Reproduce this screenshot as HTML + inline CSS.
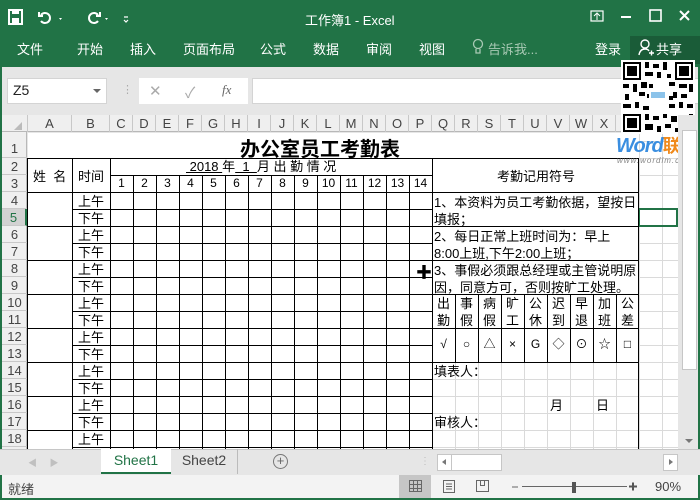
<!DOCTYPE html>
<html><head><meta charset="utf-8">
<style>
*{margin:0;padding:0;box-sizing:border-box}
body{width:700px;height:500px;overflow:hidden;position:relative;background:#e6e6e6;font-family:"Liberation Sans","Noto Sans CJK SC",sans-serif;}
.a{position:absolute}
.w{color:#fff;font-size:13px}
.ch{position:absolute;top:115px;height:17px;font-size:13px;color:#444;text-align:center;line-height:17px;border-right:1px solid #c8c8c8}
.rh{position:absolute;left:2px;width:25px;font-size:13px;color:#444;text-align:center;border-bottom:1px solid #c8c8c8}
.t{position:absolute;font-size:13px;color:#000;white-space:nowrap;font-family:"Liberation Sans","Noto Sans CJK SC",sans-serif}
.hl{position:absolute;height:1px;background:#000}
.vl{position:absolute;width:1px;background:#000}
</style></head><body>
<!-- ribbon -->
<div class="a" style="left:0;top:0;width:700px;height:67px;background:#217346"></div>
<svg class="a" style="left:8px;top:6px" width="130" height="22" viewBox="0 0 130 22">
<rect x="1" y="4" width="13" height="14" fill="none" stroke="#fff" stroke-width="2"/><rect x="4" y="4" width="7" height="4" fill="#fff"/><rect x="4" y="12" width="7" height="5" fill="#fff"/>
<path d="M33 9 a5 5 0 1 1 0 6 M31 6 v4 h4" fill="none" stroke="#fff" stroke-width="2"/><path d="M51 12 l3 0 l-1.5 2z" fill="#fff"/>
<path d="M90 9 a5 5 0 1 0 0 6 M92 6 v4 h-4" fill="none" stroke="#fff" stroke-width="2"/><path d="M97 12 l3 0 l-1.5 2z" fill="#fff"/>
<path d="M116 11 h4 M116 14 l2 2 l2 -2" fill="none" stroke="#fff" stroke-width="1.2"/>
</svg>
<div class="a w" style="left:305px;top:10px">工作簿1 - Excel</div>
<svg class="a" style="left:588px;top:6px" width="110" height="22">
<rect x="3" y="5" width="12" height="10" fill="none" stroke="#fff" stroke-width="1.2"/><path d="M9 14 v-6 M6 10 l3-3 3 3" stroke="#fff" fill="none"/>
<path d="M33 11 h10" stroke="#fff" stroke-width="2"/>
<rect x="62" y="4" width="11" height="11" fill="none" stroke="#fff" stroke-width="1.6"/>
<path d="M92 5 l9 9 M101 5 l-9 9" stroke="#fff" stroke-width="2"/>
</svg>
<div class="a w" style="left:17px;top:39px">文件</div>
<div class="a w" style="left:77px;top:39px">开始</div>
<div class="a w" style="left:130px;top:39px">插入</div>
<div class="a w" style="left:183px;top:39px">页面布局</div>
<div class="a w" style="left:260px;top:39px">公式</div>
<div class="a w" style="left:313px;top:39px">数据</div>
<div class="a w" style="left:366px;top:39px">审阅</div>
<div class="a w" style="left:419px;top:39px">视图</div>
<div class="a w" style="left:488px;top:39px;color:#a8c9b4">告诉我...</div>
<svg class="a" style="left:472px;top:38px" width="12" height="18"><circle cx="6" cy="6" r="4.5" fill="none" stroke="#a8c9b4" stroke-width="1.3"/><path d="M4 11 v4 h4 v-4" fill="none" stroke="#a8c9b4" stroke-width="1.3"/></svg>
<div class="a w" style="left:595px;top:39px">登录</div>
<div class="a" style="left:630px;top:36px;width:70px;height:28px;background:#1a5c38"></div>
<svg class="a" style="left:637px;top:38px" width="20" height="20"><circle cx="8" cy="6" r="4" fill="none" stroke="#fff" stroke-width="1.4"/><path d="M2 17 q1-6 6-6 q3 0 4 2 M12 15 h5 M14.5 12.5 v5" fill="none" stroke="#fff" stroke-width="1.4"/></svg>
<div class="a w" style="left:656px;top:39px">共享</div>
<!-- formula bar -->
<div class="a" style="left:7px;top:78px;width:100px;height:26px;background:#fff;border:1px solid #d4d4d4"></div>
<div class="a" style="left:13px;top:82px;font-size:14px;color:#222">Z5</div>
<div class="a" style="left:93px;top:89px;width:0;height:0;border-left:4px solid transparent;border-right:4px solid transparent;border-top:4px solid #666"></div>
<div class="a" style="left:122px;top:83px;font-size:11px;color:#aaa">⋮</div>
<div class="a" style="left:139px;top:78px;width:109px;height:26px;background:#fff"></div>
<div class="a" style="left:149px;top:82px;font-size:15px;color:#aaa">✕</div>
<div class="a" style="left:185px;top:82px;font-size:15px;color:#aaa">✓</div>
<div class="a" style="left:222px;top:82px;font-size:13px;color:#666;font-style:italic;font-family:'Liberation Serif',serif">fx</div>
<div class="a" style="left:252px;top:78px;width:448px;height:26px;background:#fff;border:1px solid #d4d4d4"></div>
<!-- headers -->
<div class="a" style="left:0;top:113px;width:700px;height:2px;background:#e6e6e6"></div>
<div class="a" style="left:0;top:115px;width:678px;height:17px;background:#efefef;border-bottom:1px solid #b8b8b8"></div>
<div class="a" style="left:14px;top:122px;width:0;height:0;border-left:8px solid transparent;border-bottom:8px solid #bbb"></div>
<div class="ch" style="left:27px;width:45px;border-left:1px solid #c8c8c8">A</div>
<div class="ch" style="left:72px;width:38px">B</div>
<div class="ch" style="left:110px;width:23px">C</div><div class="ch" style="left:133px;width:23px">D</div><div class="ch" style="left:156px;width:23px">E</div><div class="ch" style="left:179px;width:23px">F</div><div class="ch" style="left:202px;width:23px">G</div><div class="ch" style="left:225px;width:23px">H</div><div class="ch" style="left:248px;width:23px">I</div><div class="ch" style="left:271px;width:23px">J</div><div class="ch" style="left:294px;width:23px">K</div><div class="ch" style="left:317px;width:23px">L</div><div class="ch" style="left:340px;width:23px">M</div><div class="ch" style="left:363px;width:23px">N</div><div class="ch" style="left:386px;width:23px">O</div><div class="ch" style="left:409px;width:23px">P</div><div class="ch" style="left:432px;width:23px">Q</div><div class="ch" style="left:455px;width:23px">R</div><div class="ch" style="left:478px;width:23px">S</div><div class="ch" style="left:501px;width:23px">T</div><div class="ch" style="left:524px;width:23px">U</div><div class="ch" style="left:547px;width:23px">V</div><div class="ch" style="left:570px;width:23px">W</div><div class="ch" style="left:593px;width:23px">X</div>
<div class="a" style="left:0;top:132px;width:27px;height:317px;background:#efefef;border-right:1px solid #b8b8b8"></div>
<div class="a" style="left:0;top:67px;width:2px;height:433px;background:#217346"></div>
<div class="a" style="left:698px;top:67px;width:2px;height:433px;background:#217346"></div>
<div class="rh" style="top:132px;height:26px;line-height:34px">1</div>
<div class="rh" style="top:158px;height:17px;line-height:17px">2</div>
<div class="rh" style="top:175px;height:17px;line-height:17px">3</div>
<div class="rh" style="top:192px;height:17px;line-height:17px">4</div>
<div class="rh" style="top:209px;height:17px;line-height:17px;background:#d2d2d2;color:#217346;border-right:2px solid #217346">5</div>
<div class="rh" style="top:226px;height:17px;line-height:17px">6</div>
<div class="rh" style="top:243px;height:17px;line-height:17px">7</div>
<div class="rh" style="top:260px;height:17px;line-height:17px">8</div>
<div class="rh" style="top:277px;height:17px;line-height:17px">9</div>
<div class="rh" style="top:294px;height:17px;line-height:17px">10</div>
<div class="rh" style="top:311px;height:17px;line-height:17px">11</div>
<div class="rh" style="top:328px;height:17px;line-height:17px">12</div>
<div class="rh" style="top:345px;height:17px;line-height:17px">13</div>
<div class="rh" style="top:362px;height:17px;line-height:17px">14</div>
<div class="rh" style="top:379px;height:17px;line-height:17px">15</div>
<div class="rh" style="top:396px;height:17px;line-height:17px">16</div>
<div class="rh" style="top:413px;height:17px;line-height:17px">17</div>
<div class="rh" style="top:430px;height:17px;line-height:17px">18</div>
<!-- sheet -->
<div class="a" style="left:28px;top:133px;width:650px;height:316px;background-color:#fff;background-image:linear-gradient(to right,#dadada 1px,transparent 1px),linear-gradient(to bottom,#dadada 1px,transparent 1px);background-size:23px 17px;background-position:82px 25px"></div>
<div class="a" style="left:28px;top:133px;width:611px;height:25px;background:#fff"></div>
<div class="a" style="left:28px;top:158px;width:611px;height:204px;background:#fff"></div>
<div class="a" style="left:28px;top:362px;width:404px;height:87px;background:#fff"></div>
<!-- selection -->
<div class="a" style="left:638px;top:208px;width:40px;height:19px;border:2px solid #217346"></div>
<!-- black lines -->
<div class="hl" style="left:27px;top:158px;width:612px"></div>
<div class="hl" style="left:27px;top:192px;width:612px"></div>
<div class="hl" style="left:110px;top:175px;width:322px"></div>
<div class="vl" style="left:27px;top:158px;height:291px"></div>
<div class="vl" style="left:72px;top:158px;height:291px"></div>
<div class="vl" style="left:110px;top:158px;height:291px"></div>
<div class="vl" style="left:432px;top:158px;height:291px"></div>
<div class="vl" style="left:638px;top:158px;height:291px"></div>
<div class="a" style="left:110px;top:175px;width:323px;height:274px;background-image:linear-gradient(to right,#000 1px,transparent 1px),linear-gradient(to bottom,#000 1px,transparent 1px);background-size:23px 17px"></div>
<div class="a" style="left:72px;top:192px;width:38px;height:257px;background-image:linear-gradient(to bottom,#000 1px,transparent 1px);background-size:38px 17px"></div>
<div class="a" style="left:27px;top:192px;width:45px;height:257px;background-image:linear-gradient(to bottom,#000 1px,transparent 1px);background-size:45px 34px"></div>
<div class="hl" style="left:432px;top:226px;width:207px"></div>
<div class="hl" style="left:432px;top:260px;width:207px"></div>
<div class="hl" style="left:432px;top:294px;width:207px"></div>
<div class="hl" style="left:432px;top:328px;width:207px"></div>
<div class="hl" style="left:432px;top:362px;width:207px"></div>
<div class="a" style="left:432px;top:294px;width:207px;height:68px;background-image:linear-gradient(to right,#000 1px,transparent 1px);background-size:23px 68px"></div>
<!-- text -->
<div class="t" style="left:240px;top:133px;font-size:20px;font-weight:bold;font-family:'Liberation Sans','Noto Sans CJK SC',sans-serif">办公室员工考勤表</div>
<div class="t" style="left:33px;top:166px">姓&nbsp;&nbsp;名</div>
<div class="t" style="left:78px;top:166px">时间</div>
<div class="t" style="left:186px;top:158px;line-height:17px"><u>&nbsp;2018&nbsp;</u>年<u>&nbsp;&nbsp;1&nbsp;&nbsp;</u>月 出 勤 情 况</div>
<div class="t" style="left:110px;top:175px;line-height:17px;font-size:12px;display:flex">
<span style="width:23px;text-align:center">1</span><span style="width:23px;text-align:center">2</span><span style="width:23px;text-align:center">3</span><span style="width:23px;text-align:center">4</span><span style="width:23px;text-align:center">5</span><span style="width:23px;text-align:center">6</span><span style="width:23px;text-align:center">7</span><span style="width:23px;text-align:center">8</span><span style="width:23px;text-align:center">9</span><span style="width:23px;text-align:center">10</span><span style="width:23px;text-align:center">11</span><span style="width:23px;text-align:center">12</span><span style="width:23px;text-align:center">13</span><span style="width:23px;text-align:center">14</span></div>
<div class="t" style="left:497px;top:166px">考勤记用符号</div>
<div class="t" style="left:78px;top:193px;line-height:17px">上午<br>下午<br>上午<br>下午<br>上午<br>下午<br>上午<br>下午<br>上午<br>下午<br>上午<br>下午<br>上午<br>下午<br>上午</div>
<div class="t" style="left:434px;top:194px;line-height:17px">1、本资料为员工考勤依据，望按日<br>填报；<br>2、每日正常上班时间为：早上<br>8:00上班,下午2:00上班；<br>3、事假必须跟总经理或主管说明原<br>因，同意方可，否则按旷工处理。</div>
<div class="t" style="left:432px;top:295px;line-height:17px;display:flex;text-align:center">
<span style="width:23px">出<br>勤</span><span style="width:23px">事<br>假</span><span style="width:23px">病<br>假</span><span style="width:23px">旷<br>工</span><span style="width:23px">公<br>休</span><span style="width:23px">迟<br>到</span><span style="width:23px">早<br>退</span><span style="width:23px">加<br>班</span><span style="width:23px">公<br>差</span></div>
<div class="t" style="left:432px;top:336px;line-height:17px;display:flex;text-align:center;font-size:12px">
<span style="width:23px">√</span><span style="width:23px">○</span><span style="width:23px">△</span><span style="width:23px">×</span><span style="width:23px">G</span><span style="width:23px">◇</span><span style="width:23px">⊙</span><span style="width:23px">☆</span><span style="width:23px">□</span></div>
<div class="t" style="left:434px;top:363px;line-height:17px">填表人：</div>
<div class="t" style="left:550px;top:397px;line-height:17px">月</div>
<div class="t" style="left:596px;top:397px;line-height:17px">日</div>
<div class="t" style="left:434px;top:414px;line-height:17px">审核人：</div>
<div class="t" style="left:416px;top:259px;font-size:16px;color:#000">✚</div>
<!-- QR & logo -->
<svg class="a" style="left:621px;top:60px" width="74" height="74" viewBox="0 0 37 37">
<rect width="37" height="37" fill="#fff"/>
<g fill="#000">
<rect x="1" y="1" width="9" height="9"/><rect x="27" y="1" width="9" height="9"/><rect x="1" y="27" width="9" height="9"/>
</g><g fill="#fff"><rect x="2" y="2" width="7" height="7"/><rect x="28" y="2" width="7" height="7"/><rect x="2" y="28" width="7" height="7"/></g>
<g fill="#000"><rect x="3" y="3" width="5" height="5"/><rect x="29" y="3" width="5" height="5"/><rect x="3" y="29" width="5" height="5"/>
<path d="M12 1h2v3h-2zM16 2h3v2h-3zM21 1h2v4h-2zM12 6h4v2h-4zM18 6h2v3h-2zM23 7h2v2h-2zM1 12h3v2h-3zM6 12h2v4h-2zM10 11h3v3h-3zM14 12h2v2h-2zM24 11h3v2h-3zM29 12h4v2h-4zM34 12h2v4h-2zM2 17h2v3h-2zM9 16h3v2h-3zM26 16h2v3h-2zM30 17h3v2h-3zM1 22h4v2h-4zM7 21h2v3h-2zM11 23h3v2h-3zM24 22h3v2h-3zM29 21h2v3h-2zM33 22h3v2h-3zM12 27h2v3h-2zM16 28h3v2h-3zM21 27h2v2h-2zM25 28h3v3h-3zM30 29h2v3h-2zM34 27h2v3h-2zM12 32h4v3h-4zM18 33h2v3h-2zM22 32h3v2h-3zM27 34h4v2h-4zM33 33h3v2h-3zM13 17h2v2h-2zM24 18h2v2h-2z"/></g>
<rect x="14" y="14" width="9" height="8" fill="#fff"/><rect x="15" y="16" width="7" height="3" fill="#8cc3ea"/>
</svg>
<div class="a" style="left:616px;top:135px;width:84px;height:24px;overflow:hidden;white-space:nowrap;font-size:20px;line-height:22px;font-weight:bold;font-style:italic;color:#3a8ee0;letter-spacing:-1px">Word<span style="color:#f08a1c;font-style:normal;font-size:18px">联盟</span></div>
<div class="a" style="left:617px;top:156px;width:83px;overflow:hidden;white-space:nowrap;font-size:8px;color:#888;font-style:italic;letter-spacing:1px">www.wordlm.com</div>
<!-- vertical scrollbar -->
<div class="a" style="left:678px;top:115px;width:20px;height:334px;background:#e6e6e6"></div>
<div class="a" style="left:682px;top:130px;width:15px;height:240px;background:#fff;border:1px solid #c6c6c6"></div>
<div class="a" style="left:685px;top:439px;width:0;height:0;border-left:4px solid transparent;border-right:4px solid transparent;border-top:4px solid #777"></div>
<!-- sheet tabs -->
<div class="a" style="left:0;top:449px;width:700px;height:26px;background:#e6e6e6;border-top:1px solid #c6c6c6"></div>
<div class="a" style="left:28px;top:456px;font-size:9px;color:#c0c0c0">◀&nbsp;&nbsp;&nbsp;&nbsp;&nbsp;▶</div>
<div class="a" style="left:101px;top:449px;width:70px;height:25px;background:#fff;border-bottom:2px solid #217346;color:#217346;font-size:14px;text-align:center;line-height:23px">Sheet1</div>
<div class="a" style="left:171px;top:449px;width:67px;height:25px;color:#444;font-size:14px;text-align:center;line-height:23px;border-right:1px solid #bbb">Sheet2</div>
<div class="a" style="left:273px;top:454px;width:15px;height:15px;border:1px solid #777;border-radius:50%;color:#666;font-size:13px;line-height:12px;text-align:center">+</div>
<div class="a" style="left:420px;top:456px;font-size:10px;color:#bbb">⋮</div>
<div class="a" style="left:437px;top:454px;width:65px;height:17px;background:#fff;border:1px solid #c6c6c6"></div>
<div class="a" style="left:442px;top:459px;width:0;height:0;border-top:3px solid transparent;border-bottom:3px solid transparent;border-right:4px solid #777"></div>
<div class="a" style="left:451px;top:455px;width:1px;height:15px;background:#c6c6c6"></div>
<div class="a" style="left:663px;top:454px;width:15px;height:17px;background:#fff;border:1px solid #c6c6c6"></div>
<div class="a" style="left:669px;top:459px;width:0;height:0;border-top:3px solid transparent;border-bottom:3px solid transparent;border-left:4px solid #777"></div>
<!-- status bar -->
<div class="a" style="left:2px;top:475px;width:696px;height:23px;background:#f3f3f3"></div>
<div class="a" style="left:8px;top:479px;font-size:13px;color:#444">就绪</div>
<div class="a" style="left:399px;top:475px;width:32px;height:23px;background:#c6c6c6"></div>
<svg class="a" style="left:400px;top:475px" width="240" height="23">
<g fill="none" stroke="#666"><rect x="9.5" y="5.5" width="12" height="11"/><path d="M13.5 5.5v11M17.5 5.5v11M9.5 9.5h12M9.5 13.5h12"/>
<rect x="43.5" y="5.5" width="11" height="12"/><path d="M46 9h6M46 11.5h6M46 14h6"/>
<path d="M76.5 5.5v11h12v-11zM80.5 5.5v5h4v-5"/></g>
<path d="M112 12h6M122 11.5h105M229 11.5h8M233 7.5v8" stroke="#666"/>
<path d="M229 11.5h8M233 7.5v8" stroke="#555" stroke-width="2"/>
<rect x="172" y="7" width="4" height="11" fill="#555"/>
</svg>
<div class="a" style="left:655px;top:479px;font-size:13px;color:#444">90%</div>
<div class="a" style="left:0;top:498px;width:700px;height:2px;background:#217346"></div>
</body></html>
